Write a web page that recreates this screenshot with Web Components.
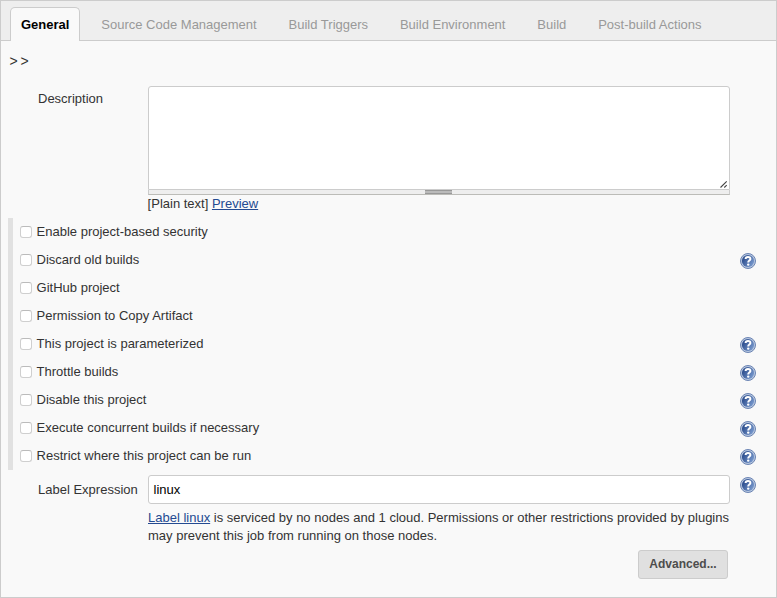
<!DOCTYPE html>
<html lang="en">
<head>
<meta charset="utf-8">
<title>Project configuration</title>
<style>
html,body{margin:0;height:100%;overflow:hidden}
body{font:13px/18px "Liberation Sans",Helvetica,Arial,sans-serif;color:#333;background:#f9f9f9}
</style>
</head>
<body>
<config-page></config-page>
<script>
function define(name, html) {
  const template = document.createElement('template');
  template.innerHTML = html;
  customElements.define(name, class extends HTMLElement {
    constructor() {
      super();
      this.attachShadow({mode: 'open'}).append(template.content.cloneNode(true));
    }
  });
}

define('config-tab', `
<style>
:host{display:block;box-sizing:border-box;height:34px;padding:8px 10px 0;border:1px solid transparent;border-bottom:0;border-radius:5px 5px 0 0;color:#999;white-space:nowrap;line-height:17px}
:host([active]){background:#f9f9f9;border-color:#ccc;color:#000;font-weight:bold}
</style><slot></slot>`);

define('tab-bar', `
<style>
:host{display:flex;gap:9.9px;box-sizing:border-box;height:40px;padding:6px 9px 0;background:linear-gradient(#ccc,#ccc) bottom/100% 1px no-repeat #eee}
</style><slot></slot>`);

define('help-icon', `
<style>:host{display:block;width:16px;height:16px}svg{display:block}</style>
<svg width="16" height="16" viewBox="0 0 16 16">
<defs><linearGradient id="g" x1="0" y1="0" x2="1" y2="0.6"><stop offset="0.1" stop-color="#254687"/><stop offset="1" stop-color="#7596cb"/></linearGradient></defs>
<circle cx="8" cy="8" r="7.5" fill="#b9c8e0" stroke="#6b84b3" stroke-width="1"/>
<circle cx="8" cy="8" r="6.1" fill="url(#g)"/>
<path d="M5.6 6C5.6 3.2 10.4 3.2 10.4 5.9C10.4 7.5 8.2 7.5 8.2 9.4" fill="none" stroke="#fff" stroke-width="2"/>
<circle cx="8.2" cy="11.6" r="1.2" fill="#fff"/>
</svg>`);

define('option-row', `
<style>
:host{display:flex;align-items:center;height:28px;padding-left:7px}
i{box-sizing:border-box;width:12px;height:12px;border:1px solid #cfcfcf;border-top-color:#bbb;border-radius:3px;background:#fff;margin-right:4.6px}
.t{flex:1;padding-bottom:1px}
help-icon{display:none;margin:2px 20px 0 0}
:host([help]) help-icon{display:block}
</style><i></i><span class="t"><slot></slot></span><help-icon></help-icon>`);

define('option-group', `
<style>:host{display:block;margin-left:7px;border-left:5px solid #e1e1e1}</style><slot></slot>`);

define('form-entry', `
<style>
:host{display:grid;grid-template-columns:110px 582px 16px;padding-left:37px}
.label{padding-top:var(--label-top,4px)}
.help{padding:2px 0 0 10px}
</style>
<div class="label"><slot name="label"></slot></div><div><slot></slot></div><div class="help"><slot name="help"></slot></div>`);

define('text-area', `
<style>
:host{display:block}
.box{box-sizing:border-box;height:104px;border:1px solid #ccc;border-radius:3px 3px 0 0;background:#fff;display:flex;align-items:flex-end;justify-content:flex-end}
.handle{box-sizing:border-box;height:5px;border:1px solid #ccc;border-top:0;border-bottom-color:#bcbcb8;background:#eee;display:flex;justify-content:center}
.grip{box-sizing:border-box;width:27px;height:4px;margin-right:2px;border:solid #999;border-width:1px 0;background:#bbb}
</style>
<div class="box"><svg width="9" height="9" viewBox="0 0 9 9"><path d="M.5 7.5L6.7 1.3M4.3 7.5L6.7 5.1" stroke="#444" stroke-width="1.1" fill="none"/></svg></div>
<div class="handle"><div class="grip"></div></div>`);

define('text-field', `
<style>:host{display:block;box-sizing:border-box;height:29px;border:1px solid #ccc;border-radius:3px;background:#fff;color:#000;padding:5px 4.6px 0}</style><slot></slot>`);

define('text-link', `
<style>a{color:#244a91;text-decoration:underline}</style><a><slot></slot></a>`);

define('push-button', `
<style>:host{display:block;box-sizing:border-box;width:90px;height:29px;border:1px solid #ccc;border-radius:3px;background:#e0e0e0;color:#4d4d4d;font-weight:bold;font-size:12px;line-height:27px;text-align:center}</style><slot></slot>`);

define('config-page', `
<style>
:host{display:block;box-sizing:border-box;height:598px;border:1px solid #ccc;background:#f9f9f9}
.crumb{height:45px;padding:11px 0 0 8.4px;box-sizing:border-box;font-size:14px;letter-spacing:3px}
.note{margin-left:-.4px}
.service{padding-top:5px;white-space:nowrap}
.actions{display:flex;justify-content:flex-end;padding:5px 48px 0 0}
.expression{margin-top:5px;--label-top:6px}
option-group{margin-top:5px}
</style>
<tab-bar>
<config-tab active>General</config-tab><config-tab>Source Code Management</config-tab><config-tab>Build Triggers</config-tab><config-tab>Build Environment</config-tab><config-tab>Build</config-tab><config-tab>Post-build Actions</config-tab>
</tab-bar>
<div class="crumb">&gt;&gt;</div>
<form-entry><span slot="label">Description</span>
<text-area></text-area><div class="note">[Plain text] <text-link>Preview</text-link></div></form-entry>
<option-group>
<option-row>Enable project-based security</option-row>
<option-row help>Discard old builds</option-row>
<option-row>GitHub project</option-row>
<option-row>Permission to Copy Artifact</option-row>
<option-row help>This project is parameterized</option-row>
<option-row help>Throttle builds</option-row>
<option-row help>Disable this project</option-row>
<option-row help>Execute concurrent builds if necessary</option-row>
<option-row help>Restrict where this project can be run</option-row>
</option-group>
<form-entry class="expression"><span slot="label">Label Expression</span>
<text-field>linux</text-field>
<div class="service"><text-link>Label linux</text-link> is serviced by no nodes and 1 cloud. Permissions or other restrictions provided by plugins<br>may prevent this job from running on those nodes.</div>
<help-icon slot="help"></help-icon></form-entry>
<div class="actions"><push-button>Advanced...</push-button></div>`);
</script>
</body>
</html>
